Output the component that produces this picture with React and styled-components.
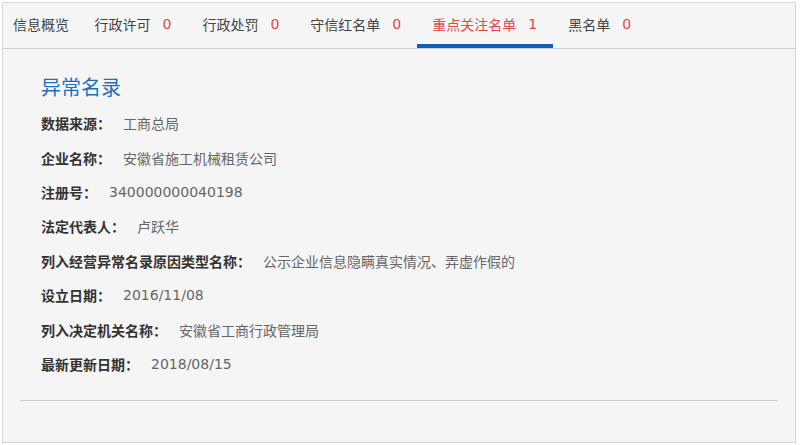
import React from "react";
import styled, { createGlobalStyle } from "styled-components";

const Global = createGlobalStyle`
  html, body { margin: 0; padding: 0; background: #ffffff; }
  body { font-family: "DejaVu Sans", "Noto Sans CJK SC", sans-serif; }
`;

const Panel = styled.div`
  margin: 2px 4px 0 2px;
  height: 439px;
  border: 1px solid #d6d6d6;
  background: #f5f5f5;
  display: flex;
  flex-direction: column;
`;

const TabBar = styled.div`
  display: flex;
  height: 45px;
  border-bottom: 1px solid #cfcfcf;
`;

const Tab = styled.div`
  display: flex;
  align-items: center;
  padding: 0 15.5px;
  border-bottom: 4px solid ${(p) => (p.$active ? "#1160b6" : "transparent")};
  font-size: 14px;
  white-space: nowrap;
  color: ${(p) => (p.$active ? "#e2474e" : "#444444")};
  &:first-child { padding: 0 10px 0 10px; }
`;

const Count = styled.span`
  margin-left: 12px;
  color: #e2474e;
`;

const Body = styled.div`
  padding: 22px 17px 0;
  display: flex;
  flex-direction: column;
`;

const Section = styled.div`
  padding-left: 21px;
  display: flex;
  flex-direction: column;
`;

const Title = styled.h2`
  margin: 0;
  font-size: 20px;
  font-weight: normal;
  line-height: 35px;
  color: #1f6fbf;
`;

const Row = styled.div`
  display: flex;
  align-items: center;
  height: 34.4px;
  font-size: 14px;
`;

const Label = styled.span`
  font-weight: bold;
  color: #333333;
  margin-right: 12px;
`;

const Value = styled.span`
  color: #666666;
`;

const Divider = styled.div`
  margin-top: 19px;
  height: 1px;
  background: #cccccc;
`;

const tabs = [
  { name: "信息概览" },
  { name: "行政许可", count: 0 },
  { name: "行政处罚", count: 0 },
  { name: "守信红名单", count: 0 },
  { name: "重点关注名单", count: 1, active: true },
  { name: "黑名单", count: 0 },
];

const rows = [
  ["数据来源：", "工商总局"],
  ["企业名称：", "安徽省施工机械租赁公司"],
  ["注册号：", "340000000040198"],
  ["法定代表人：", "卢跃华"],
  ["列入经营异常名录原因类型名称：", "公示企业信息隐瞒真实情况、弄虚作假的"],
  ["设立日期：", "2016/11/08"],
  ["列入决定机关名称：", "安徽省工商行政管理局"],
  ["最新更新日期：", "2018/08/15"],
];

export default function App() {
  return (
    <>
      <Global />
      <Panel>
        <TabBar>
          {tabs.map((t) => (
            <Tab key={t.name} $active={t.active}>
              {t.name}
              {t.count !== undefined && <Count>{t.count}</Count>}
            </Tab>
          ))}
        </TabBar>
        <Body>
          <Section>
            <Title>异常名录</Title>
            {rows.map(([l, v]) => (
              <Row key={l}>
                <Label>{l}</Label>
                <Value>{v}</Value>
              </Row>
            ))}
          </Section>
          <Divider />
        </Body>
      </Panel>
    </>
  );
}
